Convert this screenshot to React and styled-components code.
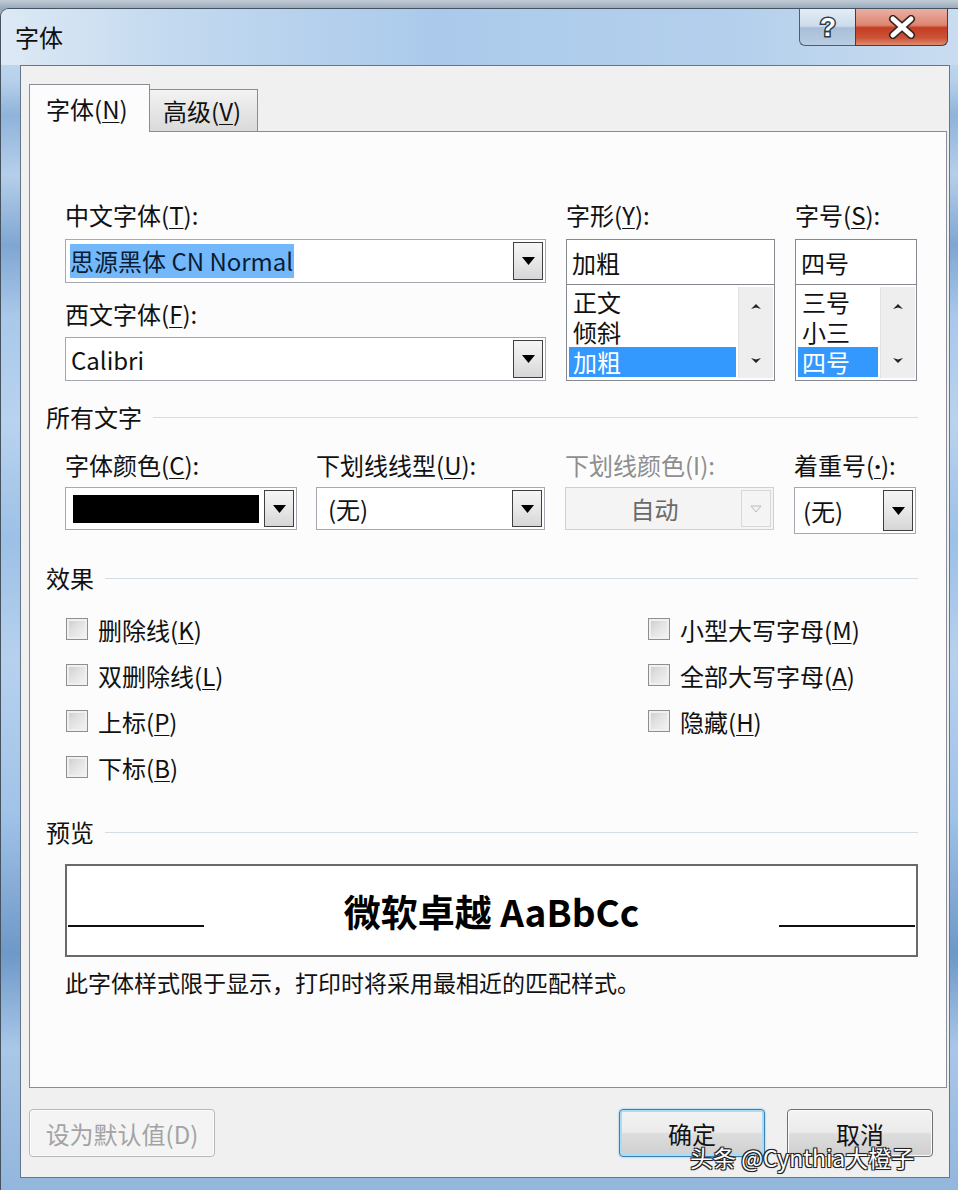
import React from "react";
import styled, { createGlobalStyle } from "styled-components";

const GlobalStyle = createGlobalStyle`
  body {
    margin: 0;
    background: #8fa2b6;
    font-family: "Noto Sans CJK SC", "Noto Sans", sans-serif;
    color: #111;
  }
`;

const Desktop = styled.div`
  position: relative;
  width: 958px;
  height: 1190px;
  overflow: hidden;
  box-sizing: border-box;
  padding-top: 8px;
  background: linear-gradient(180deg, #c3ccd6 0, #9aabbd 8px);
`;

const Window = styled.div`
  height: 100%;
  display: flex;
  flex-direction: column;
  box-sizing: border-box;
  border-top: 1px solid #44535f;
  border-left: 1px solid #44535f;
  border-radius: 9px 0 0 0;
  background: linear-gradient(180deg, #d3e2f1 0%, #b7d1ec 6%, #8fb3da 9%, #b5cfea 14%, #7fa6d2 20%, #a9c8ea 26%, #b8d3ef 35%, #9cc0e6 45%, #b6d1ee 55%, #a1c3e8 68%, #6e98c8 80%, #a9c7e8 88%, #93b6dc 100%);
`;

const TitleBar = styled.div`
  height: 56px;
  display: flex;
  align-items: center;
  padding-left: 14px;
  border-radius: 8px 0 0 0;
  background: linear-gradient(90deg, #dde9f5 0%, #c3d9ef 18%, #abcaeb 45%, #b3cfec 75%, #c9dcf0 100%);
`;

const Caption = styled.div`
  font-size: 24px;
  line-height: 28px;
  color: #0f0f0f;
`;

const CaptionButtons = styled.div`
  margin-left: auto;
  margin-right: 10px;
  align-self: flex-start;
  display: flex;
`;

const HelpButton = styled.div`
  width: 56px;
  height: 37px;
  box-sizing: border-box;
  border: 1px solid #4f5e6e;
  border-top: none;
  border-right: none;
  border-radius: 0 0 0 6px;
  background: linear-gradient(180deg, #e4edf6 0%, #ccdbeb 48%, #a8bfd7 52%, #b9cde2 100%);
  display: flex;
  align-items: center;
  justify-content: center;
`;

const CloseButton = styled.div`
  width: 93px;
  height: 37px;
  box-sizing: border-box;
  border: 1px solid #4f3a36;
  border-top: none;
  border-radius: 0 0 6px 0;
  background: linear-gradient(180deg, #eab0a4 0%, #dc8570 45%, #c33d24 52%, #cc5236 80%, #de8b70 100%);
  display: flex;
  align-items: center;
  justify-content: center;
`;

const Client = styled.div`
  flex: 1;
  display: flex;
  flex-direction: column;
  margin: 0 8px 12px 19px;
  padding: 18px 1px 0 8px;
  background: #f0f0f0;
  border: 1px solid #64768a;
`;

const TabStrip = styled.div`
  display: flex;
  align-items: flex-end;
  height: 47px;
`;

const Tab = styled.div`
  box-sizing: border-box;
  display: flex;
  align-items: center;
  font-size: 24px;
  border: 1px solid #898c95;
  border-bottom: none;
  ${p =>
    p.$active
      ? `
    width: 121px;
    height: 48px;
    margin-bottom: -1px;
    padding-left: 16px;
    background: #fcfcfc;
    position: relative;
    z-index: 1;
  `
      : `
    width: 108px;
    height: 42px;
    padding-left: 13px;
    border-left: none;
    background: linear-gradient(180deg, #f3f3f3 0%, #e6e6e6 50%, #dadada 100%);
  `}
`;

const Panel = styled.div`
  box-sizing: border-box;
  width: 918px;
  height: 957px;
  border: 1px solid #898c95;
  background: #fcfcfc;
  padding: 69px 28px 0 16px;
`;

const Label = styled.div`
  font-size: 24px;
  line-height: 28px;
  height: 28px;
  white-space: nowrap;
  color: ${p => (p.$disabled ? "#8e8e8e" : "#111")};
  margin-top: ${p => p.$mt || 0}px;
`;

const U = styled.span`
  text-decoration: underline;
  text-underline-offset: 3px;
  text-decoration-thickness: 1px;
`;

const Dot = styled(U)`
  font-family: "Noto Sans", sans-serif;
  font-weight: bold;
`;

const FontGrid = styled.div`
  display: grid;
  grid-template-columns: 481px 209px 122px;
  column-gap: 20px;
  margin-left: 19px;
`;

const Column = styled.div`
  display: flex;
  flex-direction: column;
`;

const ComboBox = styled.div`
  box-sizing: border-box;
  height: ${p => p.$h || 44}px;
  margin-top: ${p => p.$mt || 0}px;
  display: flex;
  padding: 2px;
  border: 1px solid ${p => (p.$disabled ? "#cdd0d4" : "#a5a8b0")};
  background: ${p => (p.$disabled ? "#f4f4f4" : "#fff")};
`;

const ComboText = styled.div`
  flex: 1;
  display: flex;
  align-items: center;
  justify-content: ${p => (p.$center ? "center" : "flex-start")};
  padding-left: ${p => (p.$center ? 0 : p.$pl || 2)}px;
  font-size: 24px;
  white-space: nowrap;
  color: ${p => (p.$disabled ? "#6a6a6a" : "#111")};
`;

const Highlight = styled.span`
  background: #72b8fb;
  color: #0b1c33;
  line-height: 34px;
  padding-right: 1px;
`;

const ColorSwatch = styled.div`
  flex: 1;
  margin: 5px 5px 4px 5px;
  background: #000;
`;

const DropButton = styled.div`
  width: 30px;
  box-sizing: border-box;
  display: flex;
  align-items: center;
  justify-content: center;
  border: 1px solid ${p => (p.$disabled ? "#d8d8d8" : "#3f3f3f")};
  background: ${p =>
    p.$disabled
      ? "#f4f4f4"
      : "linear-gradient(180deg, #f5f5f5 0%, #e8e8e8 50%, #d6d6d6 100%)"};
`;

const EditBox = styled.div`
  box-sizing: border-box;
  height: 46px;
  margin-top: 10px;
  border: 1px solid #868990;
  background: #fff;
  display: flex;
  align-items: center;
  padding-left: 5px;
  font-size: 24px;
`;

const ListBox = styled.div`
  box-sizing: border-box;
  height: 97px;
  margin-top: -1px;
  border: 1px solid #868990;
  background: #fff;
  display: flex;
  padding: 2px 1px 2px 2px;
`;

const ListItems = styled.div`
  flex: 1;
  display: flex;
  flex-direction: column;
  padding-right: 2px;
`;

const ListItem = styled.div`
  height: 30px;
  display: flex;
  align-items: center;
  padding-left: 4px;
  font-size: 24px;
  line-height: 26px;
  background: ${p => (p.$selected ? "#3399ff" : "transparent")};
  color: ${p => (p.$selected ? "#fff" : "#111")};
`;

const ScrollBar = styled.div`
  width: 34px;
  background: #eeeeee;
  border-left: 1px solid #e2e2e2;
  display: flex;
  flex-direction: column;
  justify-content: space-between;
  align-items: center;
  padding: 16px 0 14px;
`;

const Section = styled.div`
  display: flex;
  align-items: center;
  gap: 11px;
  margin-top: ${p => p.$mt}px;
  font-size: 24px;
  line-height: 28px;
  height: 28px;
`;

const SectionLine = styled.div`
  flex: 1;
  height: 1px;
  background: #d3dde5;
`;

const AttrGrid = styled.div`
  display: grid;
  grid-template-columns: 231px 229px 209px 122px;
  column-gap: 20px;
  margin-left: 19px;
  margin-top: 20px;
  & > div:first-child {
    margin-right: -1px;
  }
`;

const Effects = styled.div`
  display: flex;
  margin-top: 14px;
  margin-left: 20px;
`;

const EffectColumn = styled.div`
  display: flex;
  flex-direction: column;
  width: ${p => p.$w || "auto"};
`;

const CheckRow = styled.div`
  height: 46px;
  display: flex;
  align-items: center;
  gap: 10px;
  font-size: 24px;
`;

const CheckBox = styled.div`
  width: 22px;
  height: 22px;
  box-sizing: border-box;
  border: 1px solid #8e8f8f;
  background: linear-gradient(135deg, #c9cacb 0%, #e0e0e0 40%, #f6f6f6 100%);
  box-shadow: inset 0 0 0 2px #f0f0f0;
`;

const PreviewBox = styled.div`
  box-sizing: border-box;
  height: 93px;
  margin: 18px 0 0 19px;
  border: 2px solid #6a6a6a;
  background: #fff;
  display: flex;
  align-items: center;
  padding: 0 1px;
`;

const PreviewRule = styled.div`
  width: 136px;
  height: 2px;
  margin-top: 30px;
  background: #111;
`;

const PreviewText = styled.div`
  flex: 1;
  text-align: center;
  font-size: 37px;
  font-weight: bold;
  line-height: 46px;
  color: #000;
  white-space: nowrap;
`;

const Note = styled.div`
  margin: 11px 0 0 19px;
  font-size: 23px;
  line-height: 28px;
  white-space: nowrap;
`;

const ButtonRow = styled.div`
  display: flex;
  align-items: center;
  margin-top: 21px;
  padding-right: 15px;
`;

const Spacer = styled.div`
  flex: 1;
`;

const Button = styled.div`
  box-sizing: border-box;
  width: ${p => p.$w || 146}px;
  height: 48px;
  margin-left: ${p => p.$ml || 0}px;
  display: flex;
  align-items: center;
  justify-content: center;
  font-size: 24px;
  border-radius: 4px;
  border: 1px solid ${p => (p.$disabled ? "#b5b9bd" : p.$focus ? "#3c7fb1" : "#707070")};
  color: ${p => (p.$disabled ? "#a3a3a3" : "#111")};
  background: ${p =>
    p.$disabled
      ? "#f4f4f4"
      : "linear-gradient(180deg, #f3f3f3 0%, #ebebeb 48%, #dddddd 52%, #cfcfcf 100%)"};
  box-shadow: ${p =>
    p.$focus ? "inset 0 0 0 2px #a8dcf7, 0 0 2px #6fb4e3" : "inset 0 0 0 1px #fbfbfb"};
`;

const Watermark = styled.div`
  position: absolute;
  left: 690px;
  top: 1142px;
  font-size: 23px;
  line-height: 30px;
  color: #fff;
  white-space: nowrap;
  text-shadow: -1px -1px 0 #222, 1px -1px 0 #222, -1px 1px 0 #222, 1px 1px 0 #222, 0 0 2px #000;
`;

const DownArrow = ({ disabled }) =>
  disabled ? (
    <svg width="12" height="8" viewBox="0 0 12 8">
      <polygon points="1,1 11,1 6,7" fill="none" stroke="#b9b9b9" strokeWidth="1" />
    </svg>
  ) : (
    <svg width="13" height="8" viewBox="0 0 13 8">
      <polygon points="0,0 13,0 6.5,8" fill="#000" />
    </svg>
  );

const ScrollArrow = ({ up }) => (
  <svg width="12" height="7" viewBox="0 0 12 7">
    {up ? (
      <path d="M1 6 L6 1 L11 6 L6 4.5 Z" fill="#222" />
    ) : (
      <path d="M1 1 L6 6 L11 1 L6 2.5 Z" fill="#222" />
    )}
  </svg>
);

const Combo = ({ children, disabled, center, h, mt, pl }) => (
  <ComboBox $disabled={disabled} $h={h} $mt={mt}>
    <ComboText $center={center} $disabled={disabled} $pl={pl}>
      {children}
    </ComboText>
    <DropButton $disabled={disabled}>
      <DownArrow disabled={disabled} />
    </DropButton>
  </ComboBox>
);

const PickList = ({ value, items, selected }) => (
  <>
    <EditBox>{value}</EditBox>
    <ListBox>
      <ListItems>
        {items.map(item => (
          <ListItem key={item} $selected={item === selected}>
            {item}
          </ListItem>
        ))}
      </ListItems>
      <ScrollBar>
        <ScrollArrow up />
        <ScrollArrow />
      </ScrollBar>
    </ListBox>
  </>
);

const leftEffects = [
  ["删除线", "K"],
  ["双删除线", "L"],
  ["上标", "P"],
  ["下标", "B"],
];

const rightEffects = [
  ["小型大写字母", "M"],
  ["全部大写字母", "A"],
  ["隐藏", "H"],
];

const Effect = ({ name, hotkey }) => (
  <CheckRow>
    <CheckBox />
    <span>
      {name}(<U>{hotkey}</U>)
    </span>
  </CheckRow>
);

export default function App() {
  return (
    <Desktop>
      <GlobalStyle />
      <Window>
        <TitleBar>
          <Caption>字体</Caption>
          <CaptionButtons>
            <HelpButton>
              <svg width="24" height="30" viewBox="0 0 24 30">
                <text
                  x="12"
                  y="24"
                  textAnchor="middle"
                  fontSize="26"
                  fontWeight="bold"
                  fontFamily="Liberation Sans, sans-serif"
                  fill="#fff"
                  stroke="#2b3b4b"
                  strokeWidth="3"
                  paintOrder="stroke"
                >
                  ?
                </text>
              </svg>
            </HelpButton>
            <CloseButton>
              <svg width="28" height="24" viewBox="0 0 28 24">
                <path d="M5 4 L23 20 M23 4 L5 20" stroke="#3a2420" strokeWidth="8" strokeLinecap="round" />
                <path d="M5 4 L23 20 M23 4 L5 20" stroke="#fff" strokeWidth="5" strokeLinecap="round" />
              </svg>
            </CloseButton>
          </CaptionButtons>
        </TitleBar>

        <Client>
          <TabStrip>
            <Tab $active>
              字体(<U>N</U>)
            </Tab>
            <Tab>
              高级(<U>V</U>)
            </Tab>
          </TabStrip>

          <Panel>
            <FontGrid>
              <Column>
                <Label>
                  中文字体(<U>T</U>):
                </Label>
                <Combo mt={10}>
                  <Highlight>思源黑体 CN Normal</Highlight>
                </Combo>
                <Label $mt={17}>
                  西文字体(<U>F</U>):
                </Label>
                <Combo mt={9} pl={3}>
                  Calibri
                </Combo>
              </Column>
              <Column>
                <Label>
                  字形(<U>Y</U>):
                </Label>
                <PickList value="加粗" items={["正文", "倾斜", "加粗"]} selected="加粗" />
              </Column>
              <Column>
                <Label>
                  字号(<U>S</U>):
                </Label>
                <PickList value="四号" items={["三号", "小三", "四号"]} selected="四号" />
              </Column>
            </FontGrid>

            <Section $mt={22}>
              所有文字
              <SectionLine />
            </Section>

            <AttrGrid>
              <Column>
                <Label>
                  字体颜色(<U>C</U>):
                </Label>
                <ComboBox $h={43} $mt={8}>
                  <ColorSwatch />
                  <DropButton>
                    <DownArrow />
                  </DropButton>
                </ComboBox>
              </Column>
              <Column>
                <Label>
                  下划线线型(<U>U</U>):
                </Label>
                <Combo h={43} mt={8} pl={9}>
                  (无)
                </Combo>
              </Column>
              <Column>
                <Label $disabled>下划线颜色(I):</Label>
                <Combo h={43} mt={8} disabled center>
                  自动
                </Combo>
              </Column>
              <Column>
                <Label>
                  着重号(<Dot>·</Dot>):
                </Label>
                <Combo h={47} mt={8} pl={6}>
                  (无)
                </Combo>
              </Column>
            </AttrGrid>

            <Section $mt={30}>
              效果
              <SectionLine />
            </Section>

            <Effects>
              <EffectColumn $w="582px">
                {leftEffects.map(([name, key]) => (
                  <Effect key={name} name={name} hotkey={key} />
                ))}
              </EffectColumn>
              <EffectColumn>
                {rightEffects.map(([name, key]) => (
                  <Effect key={name} name={name} hotkey={key} />
                ))}
              </EffectColumn>
            </Effects>

            <Section $mt={28}>
              预览
              <SectionLine />
            </Section>

            <PreviewBox>
              <PreviewRule />
              <PreviewText>微软卓越 AaBbCc</PreviewText>
              <PreviewRule />
            </PreviewBox>

            <Note>此字体样式限于显示，打印时将采用最相近的匹配样式。</Note>
          </Panel>

          <ButtonRow>
            <Button $w={186} $disabled>
              设为默认值(D)
            </Button>
            <Spacer />
            <Button $focus>确定</Button>
            <Button $ml={22}>取消</Button>
          </ButtonRow>
        </Client>
      </Window>
      <Watermark>头条 @Cynthia大橙子</Watermark>
    </Desktop>
  );
}
